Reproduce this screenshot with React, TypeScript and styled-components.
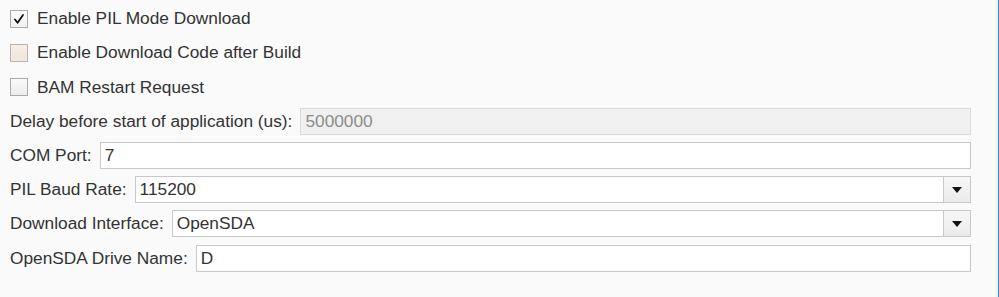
import React from "react";
import styled, { createGlobalStyle } from "styled-components";

const Global = createGlobalStyle`
  html, body { margin: 0; padding: 0; background: #fafafa; }
  body { font-family: "Liberation Sans", Arial, sans-serif; }
  * { box-sizing: border-box; }
`;

const Frame = styled.div`
  display: flex;
  width: 999px;
  height: 297px;
  background: #fafafa;
  border-right: 1px solid #2b8fdc;
`;

const Panel = styled.div`
  flex: 1;
  display: flex;
  flex-direction: column;
  padding: 1px 25px 0 10px;
  border-right: 2px solid #f1f1f1;
  color: #333333;
  font-size: 17.3px;
`;

const Row = styled.div`
  height: 34.3px;
  display: flex;
  align-items: center;
  gap: 8px;
`;

const CheckRow = styled(Row)`
  gap: 9px;
  padding-top: 1px;
`;

const Box = styled.span<{ $tone: "checked" | "warm" | "plain" }>`
  width: 18px;
  height: 18px;
  flex: none;
  display: flex;
  align-items: center;
  justify-content: center;
  border: 1px solid ${(p) => (p.$tone === "warm" ? "#bdb5ad" : "#ababab")};
  background: ${(p) =>
    p.$tone === "warm"
      ? "linear-gradient(#f6efe8, #efe6dd)"
      : p.$tone === "checked"
      ? "linear-gradient(#fdfdfd, #f1f1f1)"
      : "linear-gradient(#fafafa, #ececec)"};
`;

const Label = styled.span`
  white-space: nowrap;
  flex: none;
`;

const Field = styled.div<{ $disabled?: boolean }>`
  flex: 1;
  height: 27px;
  display: flex;
  align-items: center;
  padding-left: 4px;
  border: 1px solid ${(p) => (p.$disabled ? "#dadada" : "#c8c8c8")};
  background: ${(p) => (p.$disabled ? "#f0f0f0" : "#ffffff")};
  color: ${(p) => (p.$disabled ? "#8c8c8c" : "#333333")};
  white-space: nowrap;
`;

const Select = styled.div`
  flex: 1;
  height: 27px;
  display: flex;
  border: 1px solid #c8c8c8;
  background: #ffffff;
`;

const SelectText = styled.div`
  flex: 1;
  display: flex;
  align-items: center;
  padding-left: 4px;
`;

const ArrowButton = styled.div`
  width: 27px;
  flex: none;
  display: flex;
  align-items: center;
  justify-content: center;
  border-left: 1px solid #c8c8c8;
  background: linear-gradient(#f7f7f7, #ebebeb);
`;

const Check = () => (
  <svg width="12" height="12" viewBox="0 0 12 12">
    <path d="M2 6.5 L4.6 9.8 L10 2" fill="none" stroke="#111" strokeWidth="1.8" strokeLinecap="round" strokeLinejoin="round" />
  </svg>
);

const Arrow = () => (
  <svg width="10" height="6" viewBox="0 0 10 6">
    <path d="M0 0 H10 L5 6 Z" fill="#111" />
  </svg>
);

export default function App() {
  return (
    <>
      <Global />
      <Frame>
        <Panel>
          <CheckRow>
            <Box $tone="checked"><Check /></Box>
            <Label>Enable PIL Mode Download</Label>
          </CheckRow>
          <CheckRow>
            <Box $tone="warm" />
            <Label>Enable Download Code after Build</Label>
          </CheckRow>
          <CheckRow>
            <Box $tone="plain" />
            <Label>BAM Restart Request</Label>
          </CheckRow>
          <Row>
            <Label>Delay before start of application (us):</Label>
            <Field $disabled>5000000</Field>
          </Row>
          <Row>
            <Label>COM Port:</Label>
            <Field>7</Field>
          </Row>
          <Row>
            <Label>PIL Baud Rate:</Label>
            <Select>
              <SelectText>115200</SelectText>
              <ArrowButton><Arrow /></ArrowButton>
            </Select>
          </Row>
          <Row>
            <Label>Download Interface:</Label>
            <Select>
              <SelectText>OpenSDA</SelectText>
              <ArrowButton><Arrow /></ArrowButton>
            </Select>
          </Row>
          <Row>
            <Label>OpenSDA Drive Name:</Label>
            <Field>D</Field>
          </Row>
        </Panel>
      </Frame>
    </>
  );
}
